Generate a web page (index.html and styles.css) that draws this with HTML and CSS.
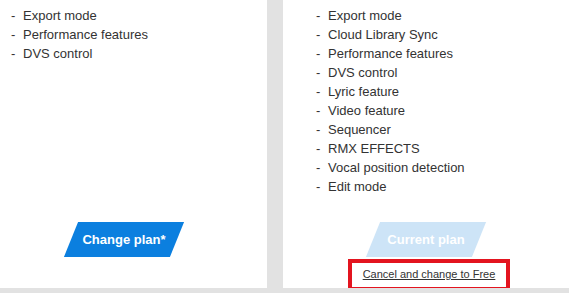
FILE: index.html
```html
<!DOCTYPE html>
<html lang="en">
<head>
    <meta charset="UTF-8">
    <meta name="viewport" content="width=device-width, initial-scale=1.0">
    <title>Plans</title>
    <link rel="stylesheet" href="styles.css">
</head>
<body>
    <div class="plans">
        <div class="plan plan-basic">
            <ul class="features">
                <li>Export mode</li>
                <li>Performance features</li>
                <li>DVS control</li>
            </ul>
            <div class="plan-footer">
                <a class="plan-btn" href="#"><span>Change plan*</span></a>
            </div>
        </div>
        <div class="plan plan-pro">
            <ul class="features">
                <li>Export mode</li>
                <li>Cloud Library Sync</li>
                <li>Performance features</li>
                <li>DVS control</li>
                <li>Lyric feature</li>
                <li>Video feature</li>
                <li>Sequencer</li>
                <li>RMX EFFECTS</li>
                <li>Vocal position detection</li>
                <li>Edit mode</li>
            </ul>
            <div class="plan-footer">
                <span class="plan-btn current"><span>Current plan</span></span>
                <div class="cancel-box">
                    <a class="cancel-link" href="#">Cancel and change to Free</a>
                </div>
            </div>
        </div>
    </div>
</body>
</html>
```

FILE: styles.css
```css
/* Base styles */
body {
    font-family: 'Liberation Sans', Arial, sans-serif;
    margin: 0;
    padding: 0;
    background: #e2e2e2;
    color: #333;
    overflow: hidden;
}

/* Plan cards */
.plans {
    display: flex;
    gap: 16px;
    margin-left: -19px;
}

.plan {
    width: 286px;
    height: 288px;
    background: #fff;
    display: flex;
    flex-direction: column;
    flex-shrink: 0;
}

.features {
    list-style: none;
    margin: 0;
    padding: 6px 0 0 33px;
    flex: 1;
    font-size: 13px;
    line-height: 19px;
}

.plan-basic .features {
    padding-left: 30px;
}

.features li::before {
    content: "-";
    display: inline-block;
    width: 12px;
}

/* Footer with button */
.plan-footer {
    height: 66px;
    display: flex;
    flex-direction: column;
    align-items: center;
}

.plan-btn {
    display: block;
    width: 106px;
    height: 35px;
    line-height: 35px;
    text-align: center;
    background: #0b7fdf;
    color: #fff;
    font-size: 13px;
    font-weight: bold;
    text-decoration: none;
    transform: skewX(-22deg);
}

.plan-btn span {
    display: block;
    transform: skewX(22deg);
}

.plan-btn.current {
    background: #cde4f7;
}

/* Cancel link */
.cancel-box {
    margin: 2px 0 0 6px;
    border: 4px solid #e3141f;
    padding: 0 11px 5px;
    height: 19px;
    line-height: 19px;
}

.cancel-link {
    color: #333;
    font-size: 11px;
}
```
